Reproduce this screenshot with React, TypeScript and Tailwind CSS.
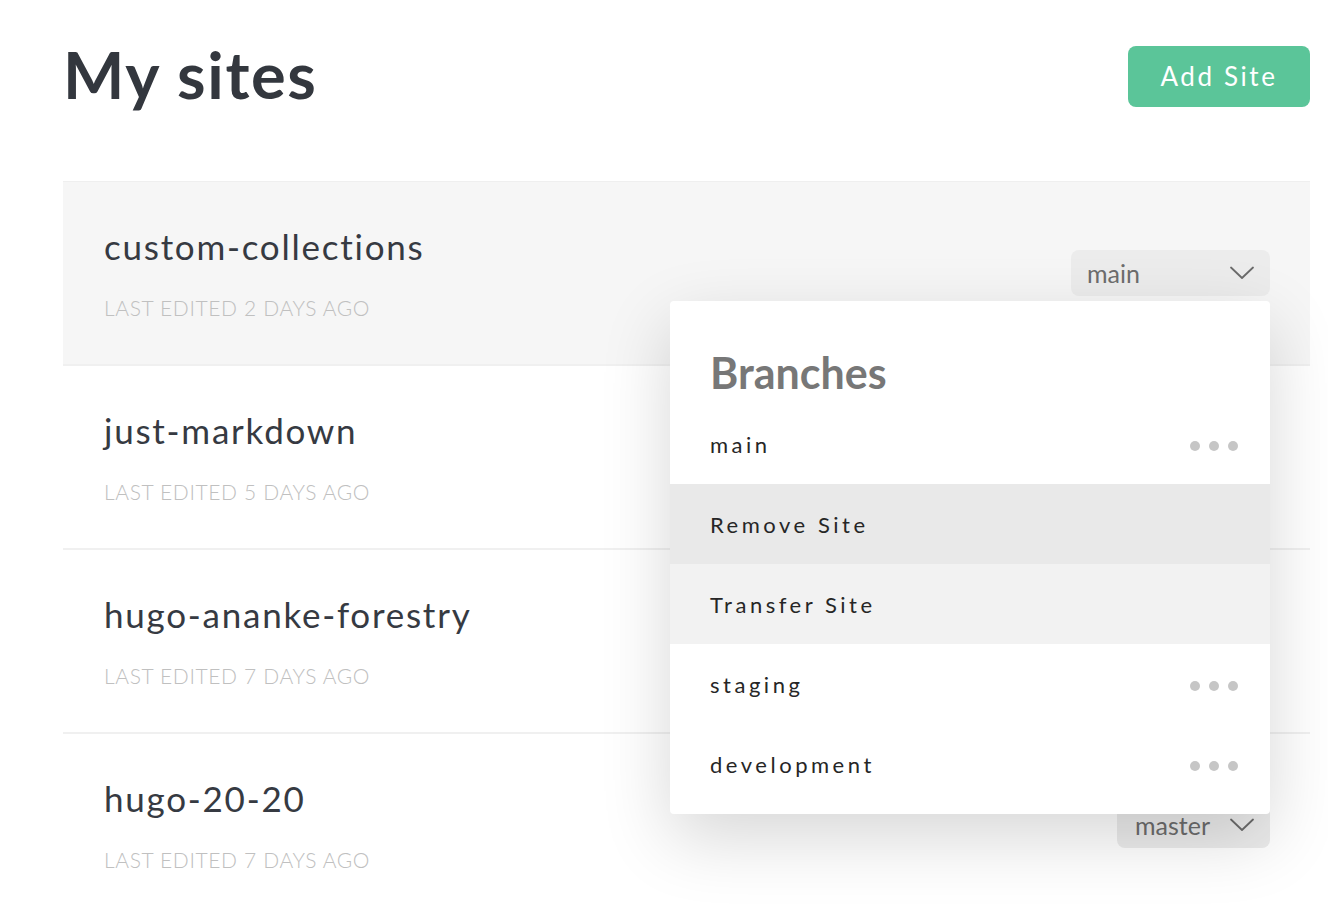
import { useState } from "react";

type Site = { name: string; edited: string; branch?: string };

const SITES: Site[] = [
  { name: "custom-collections", edited: "Last edited 2 days ago", branch: "main" },
  { name: "just-markdown", edited: "Last edited 5 days ago" },
  { name: "hugo-ananke-forestry", edited: "Last edited 7 days ago" },
  { name: "hugo-20-20", edited: "Last edited 7 days ago", branch: "master" },
];

const MENU = [
  { label: "main", dots: true, bg: "bg-white" },
  { label: "Remove Site", dots: false, bg: "bg-[#e9e9e9]" },
  { label: "Transfer Site", dots: false, bg: "bg-[#f2f2f2]" },
  { label: "staging", dots: true, bg: "bg-white" },
  { label: "development", dots: true, bg: "bg-white" },
];

const Chevron = () => (
  <svg width="24" height="14" viewBox="0 0 24 14" fill="none" className="shrink-0">
    <path d="M1 1.5 L12 12 L23 1.5" stroke="#6b6b6b" strokeWidth="1.8" strokeLinecap="round" strokeLinejoin="round" />
  </svg>
);

const Dots = () => (
  <div className="flex items-center gap-[9px] mt-[4px]">
    <span className="w-[10px] h-[10px] rounded-full bg-[#c6c6c6]" />
    <span className="w-[10px] h-[10px] rounded-full bg-[#c6c6c6]" />
    <span className="w-[10px] h-[10px] rounded-full bg-[#c6c6c6]" />
  </div>
);

const BranchMenu = () => (
  <div className="absolute right-0 top-[51px] z-10 w-[600px] bg-white rounded-[4px] shadow-[0_24px_70px_rgba(0,0,0,0.16)] pb-[10px] overflow-hidden">
    <h2 className="pl-[40px] pt-[50px] mb-[10px] text-[43px] leading-none font-bold text-[#777777]">
      Branches
    </h2>
    {MENU.map((item) => (
      <div key={item.label} className={`h-[80px] flex items-center justify-between pl-[40px] pr-[32px] ${item.bg}`}>
        <span className="text-[22px] tracking-[0.16em] text-[#262626]">{item.label}</span>
        {item.dots && <Dots />}
      </div>
    ))}
  </div>
);

const BranchSelect = ({ branch, open }: { branch: string; open: boolean }) => (
  <div className="relative">
    <button
      type="button"
      className={`h-[46px] flex items-center rounded-[8px] bg-[#ececec] pl-[16px] pr-[16px] text-[25px] text-[#6d6d6d] ${
        open ? "w-[199px] justify-between" : "gap-[20px] pl-[18px]"
      }`}
    >
      <span className="leading-none">{branch}</span>
      <Chevron />
    </button>
    {open && <BranchMenu />}
  </div>
);

export default function App() {
  const [openSite] = useState("custom-collections");

  return (
    <div className="min-h-screen bg-white font-['Lato',sans-serif] [font-variant-ligatures:none] pl-[63px] pr-[18px]">
      <header className="flex items-center justify-between pt-[46px]">
        <h1 className="text-[65px] leading-none font-bold text-[#33373e] tracking-[0.025em] -mt-[4px]">My sites</h1>
        <button
          type="button"
          className="h-[61px] w-[182px] rounded-[8px] bg-[#5bc599] text-white text-[26px] tracking-[0.1em]"
        >
          Add Site
        </button>
      </header>

      <ul className="mt-[74px] border-t border-[#efefef]">
        {SITES.map((site, i) => (
          <li
            key={site.name}
            className={`flex items-center justify-between pl-[41px] pr-[40px] h-[184px] border-b-2 border-[#f0f0f0] ${
              i === 0 ? "bg-[#f6f6f6]" : "bg-white"
            }`}
          >
            <div className="flex flex-col">
              <span className="text-[35px] leading-[40px] tracking-[0.05em] text-[#363a42]">{site.name}</span>
              <span className="mt-[30px] text-[21px] leading-[24px] font-light uppercase tracking-[0.03em] text-[#c0c0c0]">
                {site.edited}
              </span>
            </div>
            {site.branch && <BranchSelect branch={site.branch} open={openSite === site.name} />}
          </li>
        ))}
      </ul>
    </div>
  );
}
